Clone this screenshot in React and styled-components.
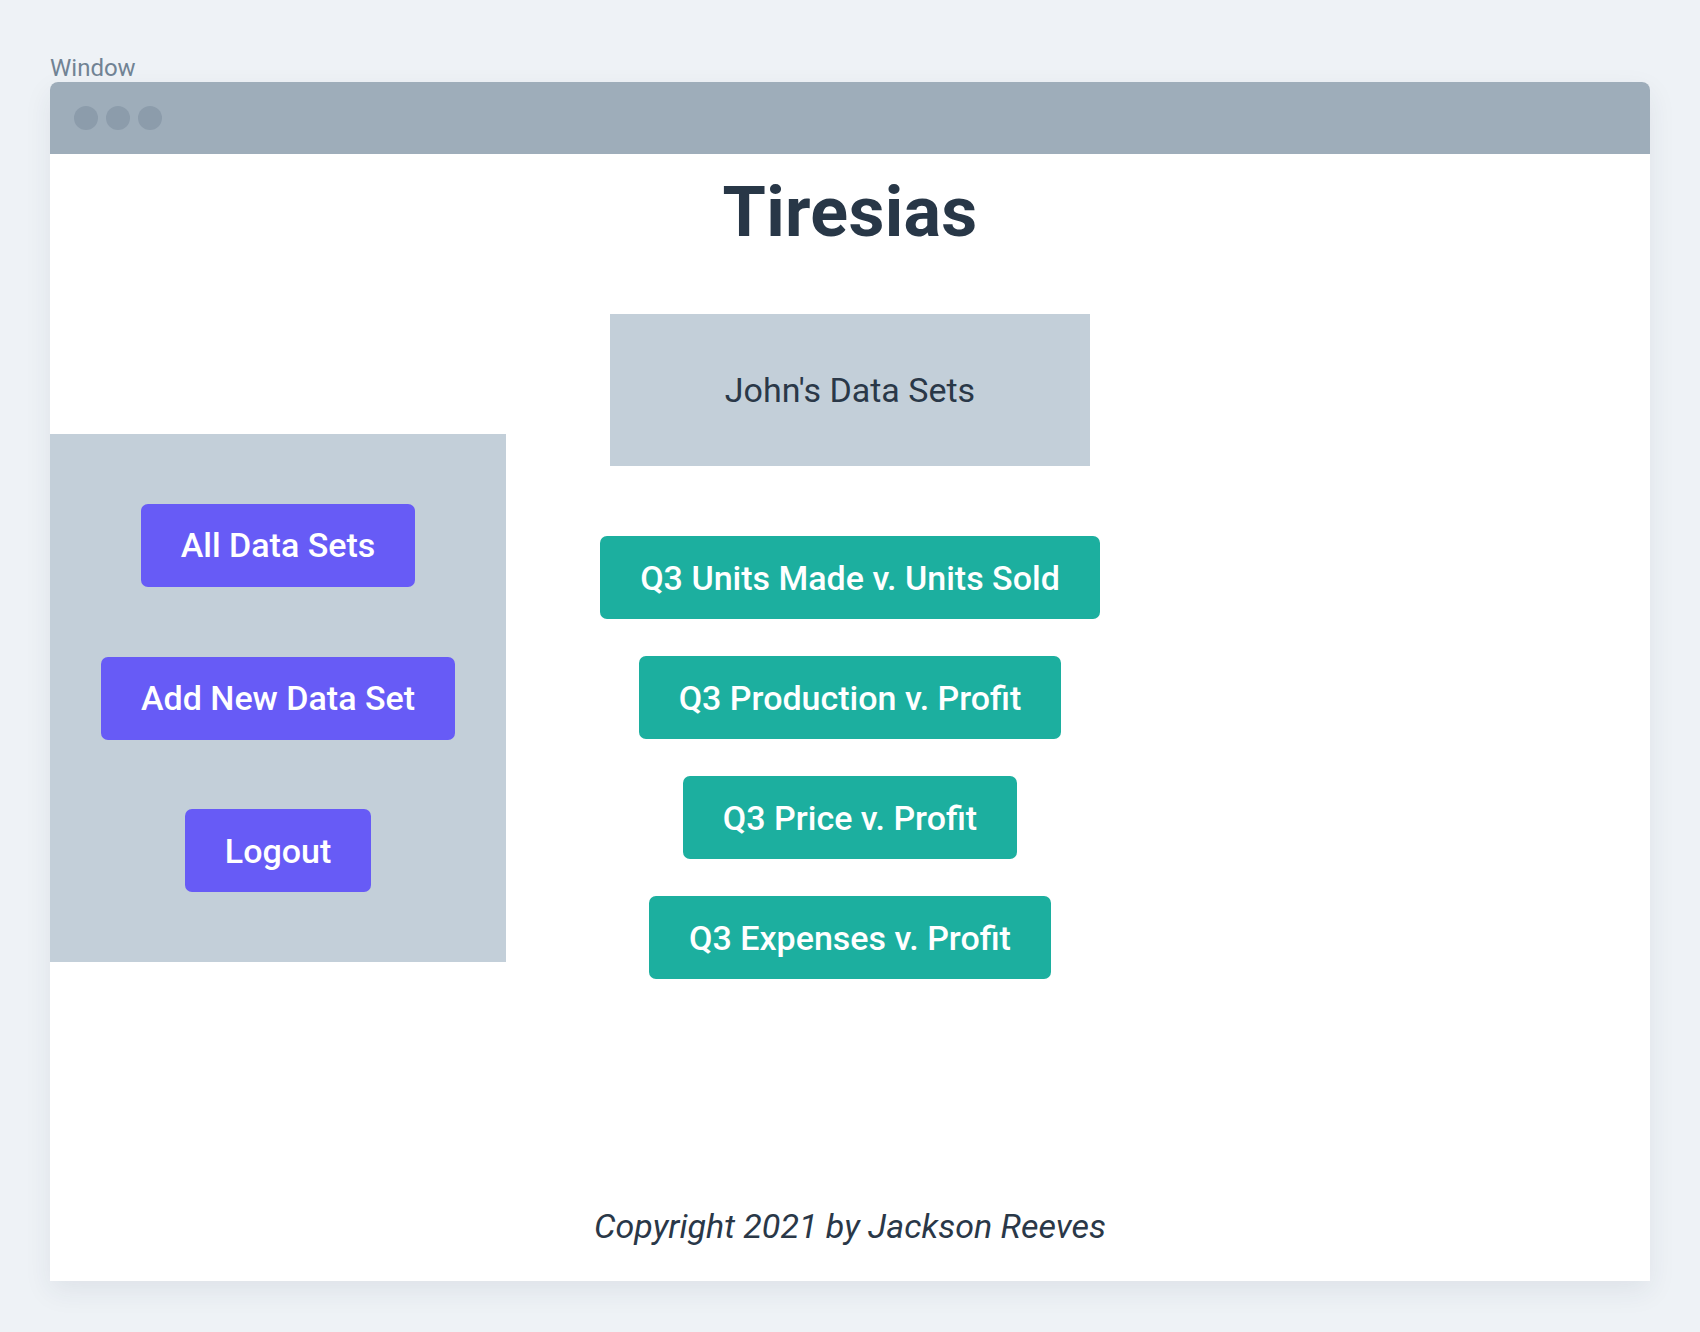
import React from 'react'
import styled, { createGlobalStyle } from 'styled-components'

const GlobalStyle = createGlobalStyle`
  html, body {
    margin: 0;
    padding: 0;
    background: #eef2f6;
    font-family: Roboto, "Liberation Sans", sans-serif;
    color: #2a3848;
  }
`

const Page = styled.div`
  width: 1700px;
  height: 1332px;
  box-sizing: border-box;
  padding: 54px 50px 0;
`

const Label = styled.div`
  font-size: 24px;
  line-height: 28px;
  color: #718394;
`

const Frame = styled.div`
  width: 1600px;
  height: 1199px;
  display: flex;
  flex-direction: column;
  border-radius: 8px 8px 0 0;
  overflow: hidden;
  background: #fff;
  box-shadow: 0 10px 28px rgba(40, 56, 72, 0.08);
`

const TitleBar = styled.div`
  height: 72px;
  flex-shrink: 0;
  background: #9eadba;
  display: flex;
  align-items: center;
  gap: 8px;
  padding-left: 24px;
`

const Dot = styled.span`
  width: 24px;
  height: 24px;
  border-radius: 50%;
  background: #8c9cab;
`

const Content = styled.div`
  flex: 1;
  display: flex;
  flex-direction: column;
`

const Title = styled.h1`
  margin: 23px 0 0;
  font-size: 70px;
  line-height: 70px;
  font-weight: 700;
  text-align: center;
  letter-spacing: 0.3px;
  color: #283747;
`

const Main = styled.div`
  margin-top: 67px;
  display: grid;
  grid-template-columns: 1fr 500px 1fr;
  align-items: start;
`

const Sidebar = styled.nav`
  margin-top: 120px;
  width: 456px;
  height: 528px;
  background: #c3cfd9;
  display: flex;
  flex-direction: column;
  align-items: center;
  justify-content: space-evenly;
`

const Center = styled.div`
  display: flex;
  flex-direction: column;
  align-items: center;
`

const OwnerBox = styled.div`
  width: 480px;
  height: 152px;
  background: #c3cfd9;
  display: flex;
  align-items: center;
  justify-content: center;
  font-size: 34px;
  color: #2a3848;
  margin-bottom: 70px;
`

const DataList = styled.div`
  display: flex;
  flex-direction: column;
  align-items: center;
  gap: 37px;
`

const Button = styled.button`
  height: 83px;
  padding: 0 40px;
  border: none;
  border-radius: 7px;
  background: ${p => (p.$variant === 'teal' ? '#1caf9f' : '#675bf6')};
  color: #fff;
  font-family: Roboto, "Liberation Sans", sans-serif;
  font-size: 34px;
  font-weight: 500;
  cursor: pointer;
  white-space: nowrap;
`

const Footer = styled.footer`
  margin-top: auto;
  padding-bottom: 34px;
  text-align: center;
  font-size: 34px;
  line-height: 41px;
  font-style: italic;
  color: #2a3848;
`

const navItems = ['All Data Sets', 'Add New Data Set', 'Logout']
const dataSets = [
  'Q3 Units Made v. Units Sold',
  'Q3 Production v. Profit',
  'Q3 Price v. Profit',
  'Q3 Expenses v. Profit',
]

export default function App() {
  return (
    <Page>
      <GlobalStyle />
      <Label>Window</Label>
      <Frame>
        <TitleBar>
          <Dot />
          <Dot />
          <Dot />
        </TitleBar>
        <Content>
          <Title>Tiresias</Title>
          <Main>
            <Sidebar>
              {navItems.map(item => (
                <Button key={item}>{item}</Button>
              ))}
            </Sidebar>
            <Center>
              <OwnerBox>John's Data Sets</OwnerBox>
              <DataList>
                {dataSets.map(item => (
                  <Button key={item} $variant="teal">{item}</Button>
                ))}
              </DataList>
            </Center>
            <div />
          </Main>
          <Footer>Copyright 2021 by Jackson Reeves</Footer>
        </Content>
      </Frame>
    </Page>
  )
}
